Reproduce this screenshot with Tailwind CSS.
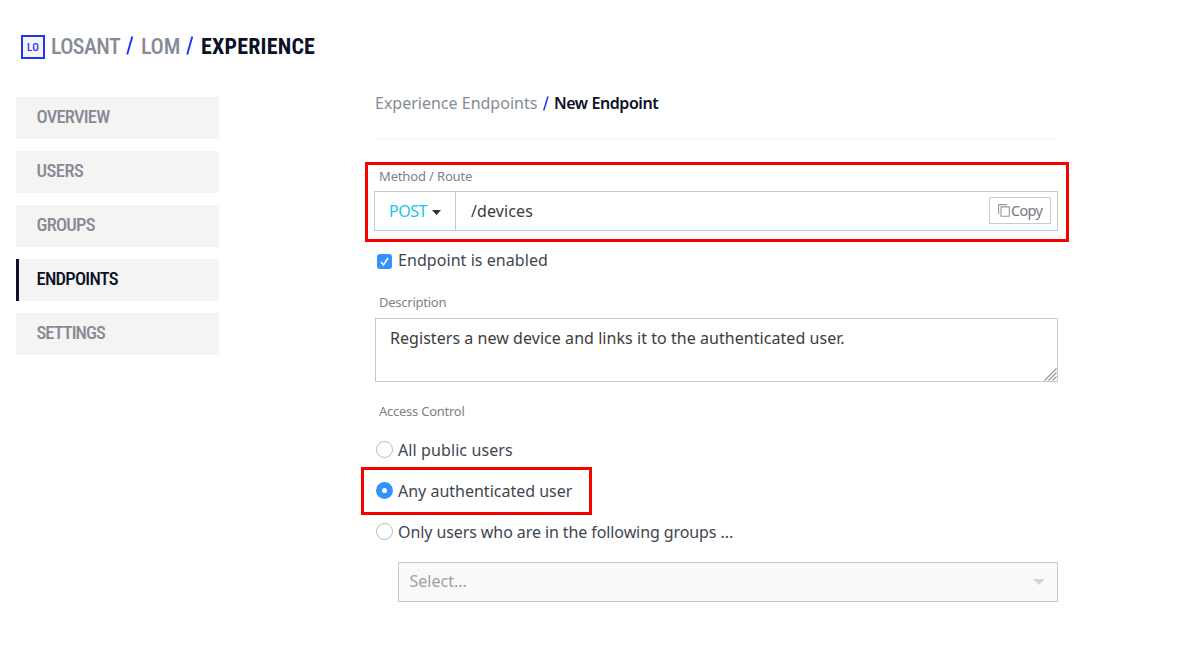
<!DOCTYPE html>
<html lang="en">
<head>
<meta charset="utf-8">
<title>New Endpoint</title>
<script src="https://cdn.jsdelivr.net/npm/@tailwindcss/browser@4"></script>
</head>
<body class="bg-white font-['Noto_Sans',sans-serif] text-base text-[#41464f]">
<div class="relative h-[651px] w-[1200px] overflow-hidden">
  <header class="flex h-[97px] items-start pt-[31px] pl-[21px] font-['Roboto',sans-serif] text-[22px] leading-[31px] font-medium font-stretch-75% whitespace-nowrap text-[#868b95]">
    <span class="mt-1 flex size-6 items-center justify-center border-2 border-[#1f33ff] bg-[#f5f4f2] text-[11px] leading-none font-medium tracking-[0.2px] text-[#1f33ff]">LO</span>
    <span class="ml-1.5 w-[75px] tracking-[-0.6px]">LOSANT</span>
    <svg class="mt-[5px] h-[19px] w-2" viewBox="0 0 8 19" fill="none" stroke="#1f33ff" stroke-width="1.9"><path d="M1.2 18.5 6.3.5"/></svg>
    <span class="ml-[7px] w-[45px] tracking-[-0.2px]">LOM</span>
    <svg class="mt-[5px] h-[19px] w-2" viewBox="0 0 8 19" fill="none" stroke="#1f33ff" stroke-width="1.9"><path d="M1.2 18.5 6.3.5"/></svg>
    <span class="ml-[7px] font-bold tracking-[0.2px] text-[#0c1127]">EXPERIENCE</span>
  </header>

  <div class="flex items-start">
    <nav class="ml-4 flex w-[203px] flex-col gap-3 font-['Roboto',sans-serif] text-[18.5px] leading-[41px] font-medium tracking-[-0.75px] font-stretch-75% text-[#868b95]">
      <a class="h-[42px] bg-[#f5f4f2] pl-[20.5px]">OVERVIEW</a>
      <a class="h-[42px] bg-[#f5f4f2] pl-[20.5px] tracking-[-0.5px]">USERS</a>
      <a class="h-[42px] bg-[#f5f4f2] pl-[20.5px]">GROUPS</a>
      <a class="h-[42px] border-l-3 border-[#0c1127] bg-[#f5f4f2] pl-[17.5px] text-[#0c1127]">ENDPOINTS</a>
      <a class="h-[42px] bg-[#f5f4f2] pl-[20.5px] tracking-[-0.95px]">SETTINGS</a>
    </nav>

    <main class="ml-[155px] flex w-[683px] flex-col">
      <div class="ml-px flex h-[43px] border-b-2 border-[#f7f7f7] leading-[13px] whitespace-nowrap">
        <span class="w-[168px] text-[#868b95]">Experience Endpoints</span>
        <svg class="-mt-px h-[15px] w-[6px]" viewBox="0 0 6 15" fill="none" stroke="#1f33ff" stroke-width="1.5"><path d="M.7 14.5 5 .5"/></svg>
        <span class="ml-[5px] font-semibold tracking-[-0.43px] text-[#0c1127]">New Endpoint</span>
      </div>

      <label class="mt-[27px] ml-[5px] h-[24px] text-[13px] leading-[18px] tracking-[-0.15px] text-[#7c818b]">Method / Route</label>
      <div class="-mr-px flex h-[40px] items-stretch border border-[#c9c9c9]">
        <div class="flex w-[81px] items-center border-r border-[#c9c9c9] pl-[14px] leading-none tracking-[-0.5px] text-[#18c5e8]">POST
          <svg class="mt-[3px] ml-[5px] h-[5px] w-[9px]" viewBox="0 0 9 5" fill="#333"><path d="M0 0h9L4.500 5z"/></svg>
        </div>
        <div class="flex flex-1 items-center pl-[15px] leading-none tracking-[0.1px] text-[#3c3c3c]">/devices</div>
        <button class="mt-[5px] mr-[6px] flex h-[27px] w-[62px] items-center border border-[#cccccc] pl-[8px] text-[14.5px] leading-none tracking-[-0.7px] text-[#747983]">
          <svg class="mr-px h-[13px] w-[12px] shrink-0" viewBox="0 0 12 13" fill="none" stroke="#999" stroke-width="1.1"><path d="M.6 10V.6h8.400M3 2.900h8.300v9.400H3z"/></svg>Copy
        </button>
      </div>

      <div class="mt-[17px] ml-[3px] flex h-[24px] items-center">
        <svg class="mt-[3px] size-[15px]" viewBox="0 0 15 15"><rect width="15" height="15" rx="3" fill="#3392fc"/><path d="m4 8 2.500 3 4.500-7" fill="none" stroke="#fff" stroke-width="1.5"/></svg>
        <span class="ml-[6px] leading-[24px] tracking-[0.06px]">Endpoint is enabled</span>
      </div>

      <label class="mt-[21px] ml-[5px] h-[25px] text-[13px] leading-[18px] tracking-[-0.25px] text-[#7c818b]">Description</label>
      <div class="relative -mr-px ml-px h-[64px] border border-[#c9c9c9] pt-[8px] pl-[14px] leading-[22px] tracking-[0.05px] text-[#3c3c3c]">Registers a new device and links it to the authenticated user.
        <svg class="absolute right-0 bottom-0 size-[13px]" viewBox="0 0 13 13" stroke="#999" stroke-width="1.2"><path d="M.5 12.500 12.500.5M4.500 12.500l8-8M8.500 12.500l4-4"/></svg>
      </div>

      <label class="mt-[20px] ml-[5px] h-[18px] text-[13px] leading-[18px] tracking-[-0.25px] text-[#7c818b]">Access Control</label>
      <div class="mt-[9px] ml-[2px] flex flex-col">
        <div class="flex h-[41px] items-center"><span class="mr-[5px] size-[17px] rounded-full border border-[#b8b8b8]"></span><span class="tracking-[0.1px]">All public users</span></div>
        <div class="flex h-[41px] items-center"><span class="mr-[5px] flex size-[17px] items-center justify-center rounded-full bg-[#3392fc]"><span class="size-[5px] rounded-full bg-white"></span></span>Any authenticated user</div>
        <div class="flex h-[41px] items-center"><span class="mr-[5px] size-[17px] rounded-full border border-[#b8b8b8]"></span><span class="tracking-[-0.09px]">Only users who are in the following groups ...</span></div>
      </div>
      <div class="-mr-px mt-[10px] ml-[24px] flex h-[40px] items-center justify-between border border-[#c6c6c6] bg-[#f9f9f9] pr-[12px] pb-0.5 pl-[10.5px] leading-none text-[#a0a0a0]">Select...
        <svg class="mt-0.5 h-[6px] w-[12px]" viewBox="0 0 12 6" fill="#d6d6d6"><path d="M0 0h12L6 6z"/></svg>
      </div>
    </main>
  </div>

  <div class="absolute top-[162px] left-[365px] h-[80px] w-[704px] border-3 border-[#f80000]"></div>
  <div class="absolute top-[467px] left-[361px] h-[48px] w-[231px] border-3 border-[#f80000]"></div>
</div>
</body>
</html>
